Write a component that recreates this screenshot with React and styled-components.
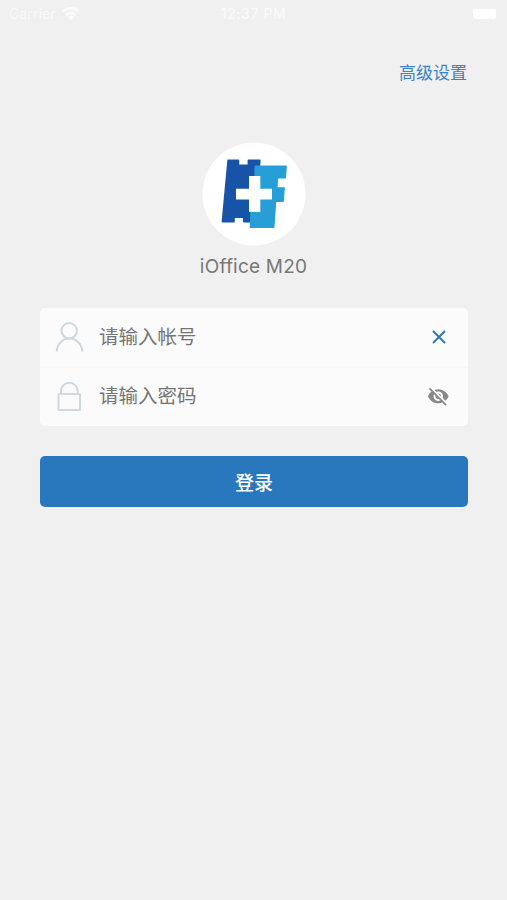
import React, { useState } from 'react';
import styled, { createGlobalStyle } from 'styled-components';
import { MdVisibility, MdVisibilityOff } from 'react-icons/md';

const GlobalStyle = createGlobalStyle`
  * {
    box-sizing: border-box;
  }

  body {
    margin: 0;
    background-color: #f0f0f0;
    font-family: Inter, "Noto Sans CJK SC", sans-serif;
  }
`;

const Screen = styled.main`
  display: flex;
  flex-direction: column;
  height: 900px;
  overflow: hidden;
  background-color: #f0f0f0;
`;

const StatusBar = styled.div`
  display: grid;
  grid-template-columns: 1fr auto 1fr;
  align-items: center;
  height: 28px;
  padding: 0 11px;
  padding-left: 9px;
  color: #fafafa;
  font-size: 14px;
  line-height: 28px;
`;

const Carrier = styled.div`
  display: flex;
  align-items: center;
  gap: 6px;
  letter-spacing: 0.1px;
`;

const Time = styled.span`
  padding-left: 2px;
  font-size: 14px;
  font-weight: 500;
  letter-spacing: 0.6px;
`;

const Battery = styled.span`
  justify-self: end;
  width: 23px;
  height: 10px;
  border-radius: 3px;
  background-color: #fff;
`;

const TopActions = styled.div`
  display: flex;
  justify-content: flex-end;
  padding: 33px 40px 0 0;
`;

const SettingsLink = styled.a`
  color: #3c83c4;
  font-size: 17px;
  line-height: 24px;
  text-decoration: none;
`;

const Brand = styled.div`
  display: flex;
  flex-direction: column;
  align-items: center;
  margin-top: 57px;
`;

const BrandName = styled.h1`
  margin: 7px 0 0;
  color: #777;
  font-size: 19px;
  font-weight: 400;
  line-height: 28px;
  letter-spacing: 0.2px;
`;

const Form = styled.form`
  display: flex;
  flex-direction: column;
  gap: 30px;
  margin: 27px 39px 0 40px;
`;

const Fields = styled.div`
  border-radius: 5px;
  background-color: #fbfbfb;
`;

const Field = styled.label`
  display: flex;
  align-items: center;
  height: 59px;
  padding: 0 18px 2px 15px;

  & + & {
    border-top: 1px solid #f7f7f7;
  }
`;

const Input = styled.input`
  flex: 1;
  min-width: 0;
  margin-left: 15px;
  padding: 0;
  border: 0;
  outline: none;
  background: none;
  color: #333;
  font-family: inherit;
  font-size: 19.5px;
  line-height: 30px;

  &::placeholder {
    color: #757575;
    opacity: 1;
  }
`;

const IconButton = styled.button`
  display: flex;
  align-items: center;
  justify-content: center;
  width: 23px;
  height: 24px;
  padding: 0;
  border: 0;
  background: none;
  color: ${(props) => props.$color};
`;

const LoginButton = styled.button`
  height: 51px;
  padding: 4px 0 0;
  border: 0;
  border-radius: 5px;
  background-color: #2977bd;
  color: #fff;
  font-family: inherit;
  font-size: 19px;
  font-weight: 500;
  line-height: 47px;
`;

const WifiIcon = () => (
  <svg width="18" height="14" viewBox="0 0 18 14" fill="none" stroke="currentColor" strokeWidth="2.8">
    <path d="M1 4.6a11.5 11.5 0 0 1 16 0" />
    <path d="M4 8a7.3 7.3 0 0 1 10 0" />
    <path d="M9 13.4 6 10.3a4.3 4.3 0 0 1 6 0z" fill="currentColor" stroke="none" />
  </svg>
);

const Logo = () => (
  <svg width="104" height="104" viewBox="0 0 104 104">
    <circle cx="52" cy="52" r="51.5" fill="#fff" />
    <g strokeWidth="1.4" strokeLinejoin="round">
      <path
        d="M26 18.3h10.5v4.9h9.8v-4.9h11.6L56 50l-8 29.8h-6.4v-4.5h-9.5v4.5H20.3z"
        fill="#1754a8"
        stroke="#1754a8"
      />
      <path
        d="M53.2 24.3h31l-.9 11.4h-7.7L74.8 46h7.4l-1.1 13.3h-7.5l-1.8 26H48.4l.6-15.3 4-23z"
        fill="#269fd7"
        stroke="#269fd7"
      />
    </g>
    <path d="M47 34h11.3v12.7H70v10.8H58.3V70H47V57.5H34V46.7h13z" fill="#fff" />
  </svg>
);

const UserIcon = () => (
  <svg width="29" height="32" viewBox="0 0 29 32" fill="none" stroke="#cbd9e5" strokeWidth="2">
    <circle cx="14.2" cy="9.8" r="7.7" />
    <path d="M1.8 30.5C2 23 7.3 17.6 14.3 17.6S27 23 27.2 30.5" />
  </svg>
);

const LockIcon = () => (
  <svg width="29" height="32" viewBox="0 0 29 32" fill="none" stroke="#cbd9e5" strokeWidth="2">
    <rect x="3.5" y="14" width="21.5" height="16" rx="0.6" />
    <path d="M6 14v-3a8.3 8.3 0 0 1 16.6 0v3" />
  </svg>
);

const ClearIcon = () => (
  <svg width="14" height="14" viewBox="0 0 14 14" fill="none" stroke="currentColor" strokeWidth="1.9">
    <path d="m1 1 12 12M13 1 1 13" />
  </svg>
);

const App = () => {
  const [account, setAccount] = useState('');
  const [password, setPassword] = useState('');
  const [visible, setVisible] = useState(false);

  return (
    <>
      <GlobalStyle />
      <Screen>
        <StatusBar>
          <Carrier>
            Carrier
            <WifiIcon />
          </Carrier>
          <Time>12:37 PM</Time>
          <Battery />
        </StatusBar>
        <TopActions>
          <SettingsLink href="#">高级设置</SettingsLink>
        </TopActions>
        <Brand>
          <Logo />
          <BrandName>iOffice M20</BrandName>
        </Brand>
        <Form onSubmit={(e) => e.preventDefault()}>
          <Fields>
            <Field>
              <UserIcon />
              <Input
                value={account}
                onChange={(e) => setAccount(e.target.value)}
                placeholder="请输入帐号"
              />
              <IconButton type="button" $color="#2977bd" aria-label="清除" onClick={() => setAccount('')}>
                <ClearIcon />
              </IconButton>
            </Field>
            <Field>
              <LockIcon />
              <Input
                type={visible ? 'text' : 'password'}
                value={password}
                onChange={(e) => setPassword(e.target.value)}
                placeholder="请输入密码"
              />
              <IconButton type="button" $color="#888" aria-label="显示密码" onClick={() => setVisible(!visible)}>
                {visible ? <MdVisibility size={22.5} /> : <MdVisibilityOff size={22.5} />}
              </IconButton>
            </Field>
          </Fields>
          <LoginButton type="submit">登录</LoginButton>
        </Form>
      </Screen>
    </>
  );
};

export default App;
